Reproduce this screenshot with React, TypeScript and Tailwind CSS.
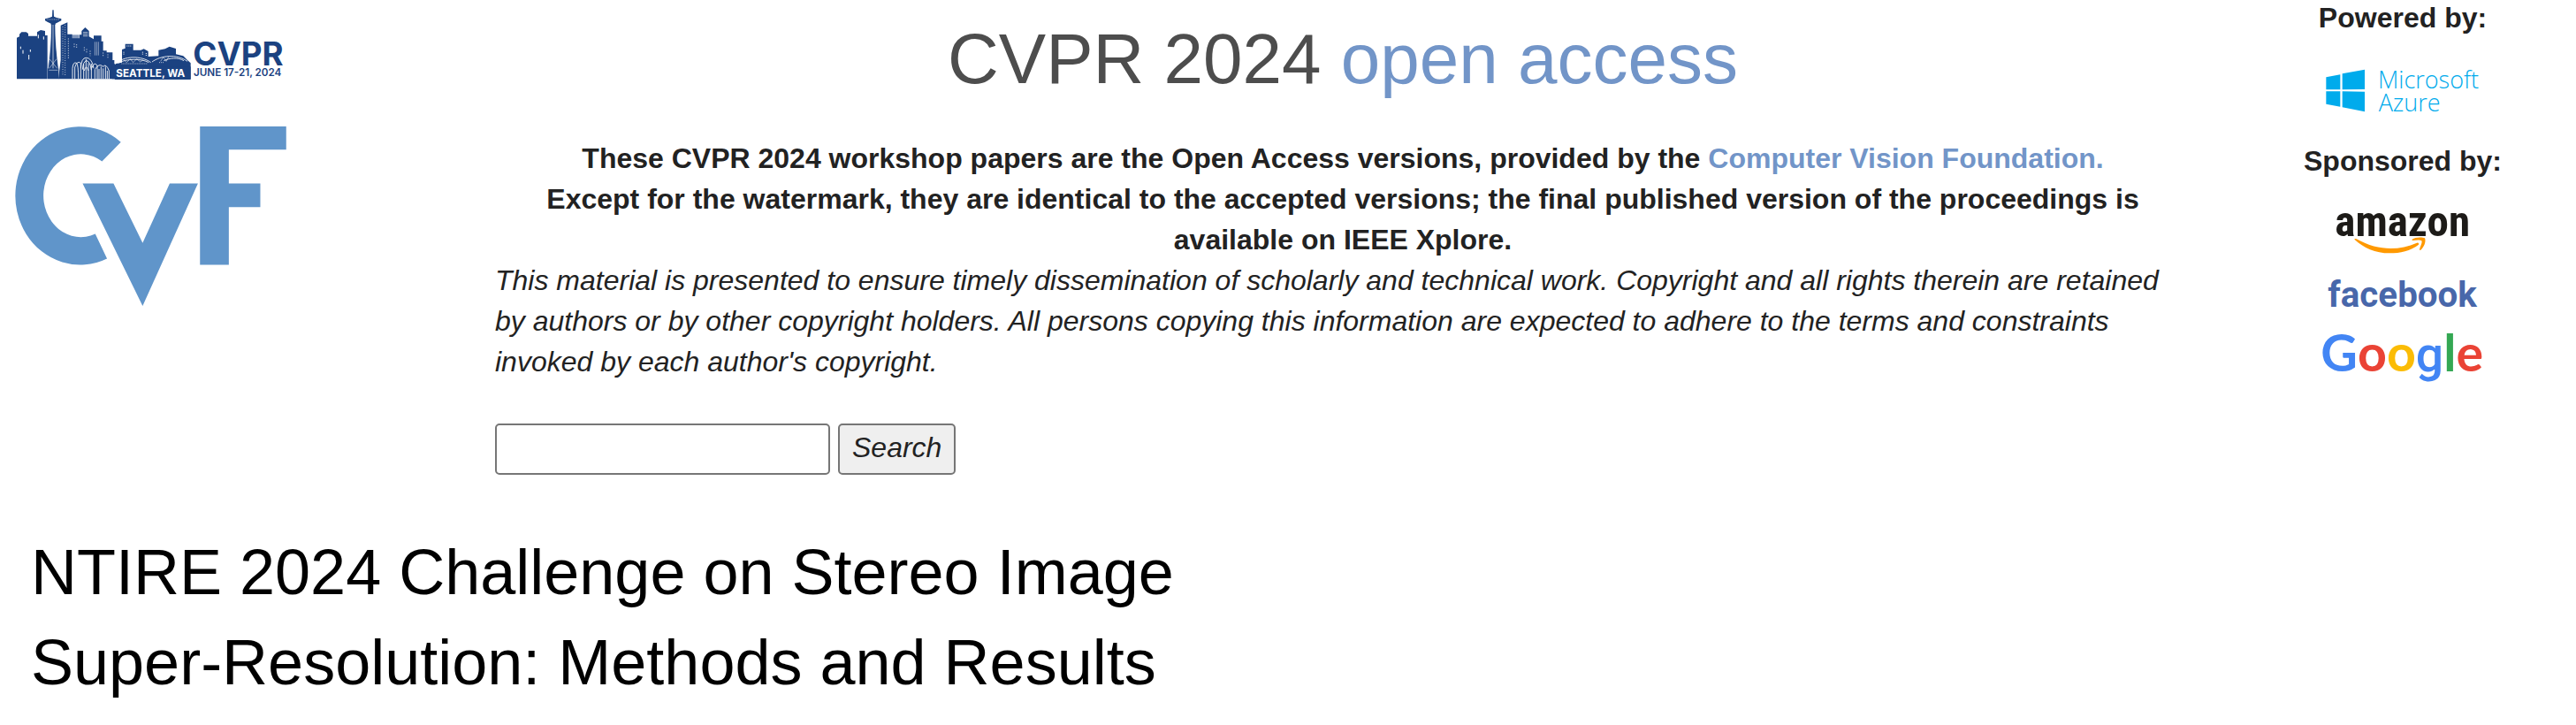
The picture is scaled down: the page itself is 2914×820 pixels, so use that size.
import React from "react";

const NAVY = "#1b4281";

function ConferenceLogo() {
  return (
    <svg viewBox="51 33 909 237" className="h-[79px] w-[303px] overflow-visible" role="img" aria-label="CVPR Seattle 2024">
      <g fill={NAVY}>
        <path d="M57 268V128L66 124V116L73 109H89L96 114V122H126V109L138 102L153 105V120H161V268Z" />
        <path d="M178 34H182L183 56L192 60L208 64V70L198 75L188 80C188 120 190 170 199 234V268H162V234C171 170 173 120 173 80L162 75L153 70V64L168 60L177 56Z" />
        <path d="M198 268L206 204V86L229 76V116H245V130H270V118H277V105L289 93L302 105V124L318 133V121H344V140H350V172H362V178H382V204H388V268Z" />
        <path d="M244 118H269V136H244Z" opacity="0.55" />
        <path d="M380 268V218L414 212V168L425 164V149H452V170H478L488 166L503 174V192L538 190V170L560 166L575 158L597 165V184L622 190L636 204L647 214V268Z" />
      </g>
      <g stroke="#fff" fill="none" strokeWidth="2">
        <path d="M173 84C173 130 170 180 163 232M188 84C188 130 192 180 199 232M180 84V232" />
        <path d="M166 238H196M168 200L194 232M192 200L167 232" strokeWidth="1.5" />
        <path d="M158 66H203" strokeDasharray="3 2" strokeWidth="1.5" />
        <path d="M70 158V166M78 170V182M103 168V176M98 186V202M130 118V130M148 124V134" strokeWidth="3" />
        <path d="M213 90V255M221 84V255" strokeDasharray="3 5" />
        <path d="M282 110H298M282 116H298M282 122H298" />
        <path d="M322 142V188M328 142V188M334 142V188" strokeWidth="1.5" />
        <path d="M286 160V176M294 166V182M306 172V190M252 148V160M260 150V162M350 178V190M366 184V196M232 130V200" strokeDasharray="4 4" />
        <path d="M430 156H446M420 176V188M484 176V188M496 180V190" strokeDasharray="3 3" strokeWidth="3" />
        <path d="M390 218C420 188 480 188 512 212M400 214C430 198 480 198 505 212M516 210C545 188 600 182 636 208M556 206C575 196 605 194 624 206" strokeWidth="2.5" />
        <path d="M420 203L430 212L442 200L452 212L464 200L476 210L486 203M545 208L554 194L564 208L573 192" strokeWidth="1.5" />
        <path d="M412 216H500M540 212H556" strokeDasharray="3 3" strokeWidth="2" />
      </g>
      <g stroke="#fff" fill="none" strokeWidth="2.6">
        <path d="M246 268V232Q248 208 260 214Q266 220 266 268M254 268V228Q262 204 274 214V268" />
        <path d="M274 232Q276 196 292 196Q312 196 318 232M280 236Q282 208 294 206Q306 208 310 238M286 240Q292 214 300 240M292 200V268M300 214V268M284 218V268M310 216V268" />
        <path d="M312 230Q320 208 330 222V268M322 268V236Q336 212 350 226Q360 214 370 240V268M336 268V234M343 226V268M350 232V268M358 226V268M364 240V268" />
      </g>
      <rect x="389" y="226" width="258" height="44" fill={NAVY} />
      <text x="394" y="260" fontFamily="Inter, sans-serif" fontWeight="700" fontSize="35" fill="#fff">SEATTLE, WA</text>
      <text x="655" y="221" fontFamily="Inter, sans-serif" fontWeight="700" fontSize="110" fill={NAVY}>CVPR</text>
      <text x="657" y="259" fontFamily="Inter, sans-serif" fontWeight="600" fontSize="35" fill={NAVY}>JUNE 17-21, 2024</text>
    </svg>
  );
}

function FoundationLogo() {
  return (
    <svg viewBox="50 68 921 610" className="h-[203px] w-[307px]" fill="#6095ca" role="img" aria-label="Computer Vision Foundation">
      <path d="M409 121A220 235 0 1 0 362 517L322 433A127 141 0 1 1 345 187Z" />
      <path d="M279 262H384L483 464L575 262H671L483 678Z" />
      <path d="M678 68H971V147H776V262H883V342H776V538H678Z" />
    </svg>
  );
}

function AzureLogo() {
  return (
    <svg viewBox="144 231 540 156" className="h-[52px] w-[180px] overflow-visible" fill="#00abec" role="img" aria-label="Microsoft Azure">
      <path d="M154 262L202 253V304H154ZM209 250L285 236V303L209 304ZM154 310H202V362L154 353ZM209 310L285 311V379L209 364Z" />
      <text x="330" y="300" fontFamily="'Open Sans', sans-serif" fontWeight="300" fontSize="81">Microsoft</text>
      <text x="332" y="378" fontFamily="'Open Sans', sans-serif" fontWeight="300" fontSize="81">Azure</text>
    </svg>
  );
}

function AmazonLogo() {
  return (
    <svg viewBox="144 75 540 165" className="h-[55px] w-[180px] overflow-visible" role="img" aria-label="amazon">
      <text x="184" y="171" fontFamily="'Roboto Condensed', Roboto, sans-serif" fontWeight="700" fontSize="147" fill="#1d1b18">amazon</text>
      <path d="M250 182Q251 178 257 181C330 222 400 221 462 194Q470 192 468 200C440 222 405 229 370 229C320 229 282 211 250 182Z" fill="#ff9900" />
      <path d="M445 183C458 174 478 174 489 178C494 190 486 210 474 219Q469 220 472 212C478 198 480 191 478 187C472 183 460 185 447 186Z" fill="#ff9900" />
    </svg>
  );
}

function FacebookLogo() {
  return (
    <svg viewBox="144 300 540 120" className="h-[40px] w-[180px] overflow-visible" role="img" aria-label="facebook">
      <text x="160" y="410" fontFamily="Roboto, sans-serif" fontWeight="700" fontSize="121" fill="#4867aa">facebook</text>
    </svg>
  );
}

function GoogleLogo() {
  return (
    <svg viewBox="144 480 540 198" className="h-[66px] w-[180px] overflow-visible" role="img" aria-label="Google">
      <text x="136" y="630" fontFamily="Lato, sans-serif" fontWeight="700" fontSize="172" fill="#4285f4">
        G<tspan fill="#ea4335">o</tspan><tspan fill="#fbbc05">o</tspan><tspan fontFamily="Roboto, sans-serif" fontWeight="500" fontSize="166">g</tspan><tspan fill="#34a853">l</tspan><tspan fill="#ea4335">e</tspan>
      </text>
    </svg>
  );
}

export default function App() {
  return (
    <div className="min-h-screen bg-white font-['Liberation_Sans',Arial,sans-serif] text-[32px] leading-[46px] text-[#222]">
      <header className="flex items-start">
        <div className="flex w-[560px] shrink-0 flex-col items-start gap-[53px] pl-[17px] pt-[11px]">
          <a href="#conference"><ConferenceLogo /></a>
          <a href="#foundation"><FoundationLogo /></a>
        </div>

        <div className="min-w-0 flex-1">
          <div className="text-center text-[80px] leading-[134px] text-[#4d4d4d]">
            CVPR 2024 <a href="#home" className="text-[#7295c8]">open access</a>
          </div>
          <p className="mt-[22px] text-center font-bold">
            These CVPR 2024 workshop papers are the Open Access versions, provided by the{" "}
            <a href="#foundation" className="text-[#7295c8]">Computer Vision Foundation.</a>
            <br />
            Except for the watermark, they are identical to the accepted versions; the final published version of the proceedings is available on IEEE Xplore.
          </p>
          <p className="italic">
            This material is presented to ensure timely dissemination of scholarly and technical work. Copyright and all rights therein are retained by authors or by other copyright holders. All persons copying this information are expected to adhere to the terms and constraints invoked by each author's copyright.
          </p>
          <form className="mt-[47px] flex gap-[9px]" onSubmit={(e: React.FormEvent) => e.preventDefault()}>
            <input
              type="text"
              aria-label="Search papers"
              className="h-[58px] w-[379px] rounded-[5px] border-2 border-[#767676] bg-white px-1 italic"
            />
            <button type="submit" className="h-[58px] rounded-[5px] border-2 border-[#767676] bg-[#efefef] px-[14px] pb-1 italic">
              Search
            </button>
          </form>
        </div>

        <div className="ml-[44px] flex w-[392px] shrink-0 flex-col items-center">
          <div className="font-bold leading-[40px]">Powered by:</div>
          <a href="#azure" className="mt-[37px]"><AzureLogo /></a>
          <div className="mt-[30px] font-bold">Sponsored by:</div>
          <a href="#amazon" className="mt-[30px]"><AmazonLogo /></a>
          <a href="#facebook" className="mt-5"><FacebookLogo /></a>
          <a href="#google" className="mt-5"><GoogleLogo /></a>
        </div>
      </header>

      <main className="px-[35px] pt-[59px]">
        <h1 className="max-w-[1400px] text-[72px] leading-[102px] text-black">
          NTIRE 2024 Challenge on Stereo Image Super-Resolution: Methods and Results
        </h1>
      </main>
    </div>
  );
}
